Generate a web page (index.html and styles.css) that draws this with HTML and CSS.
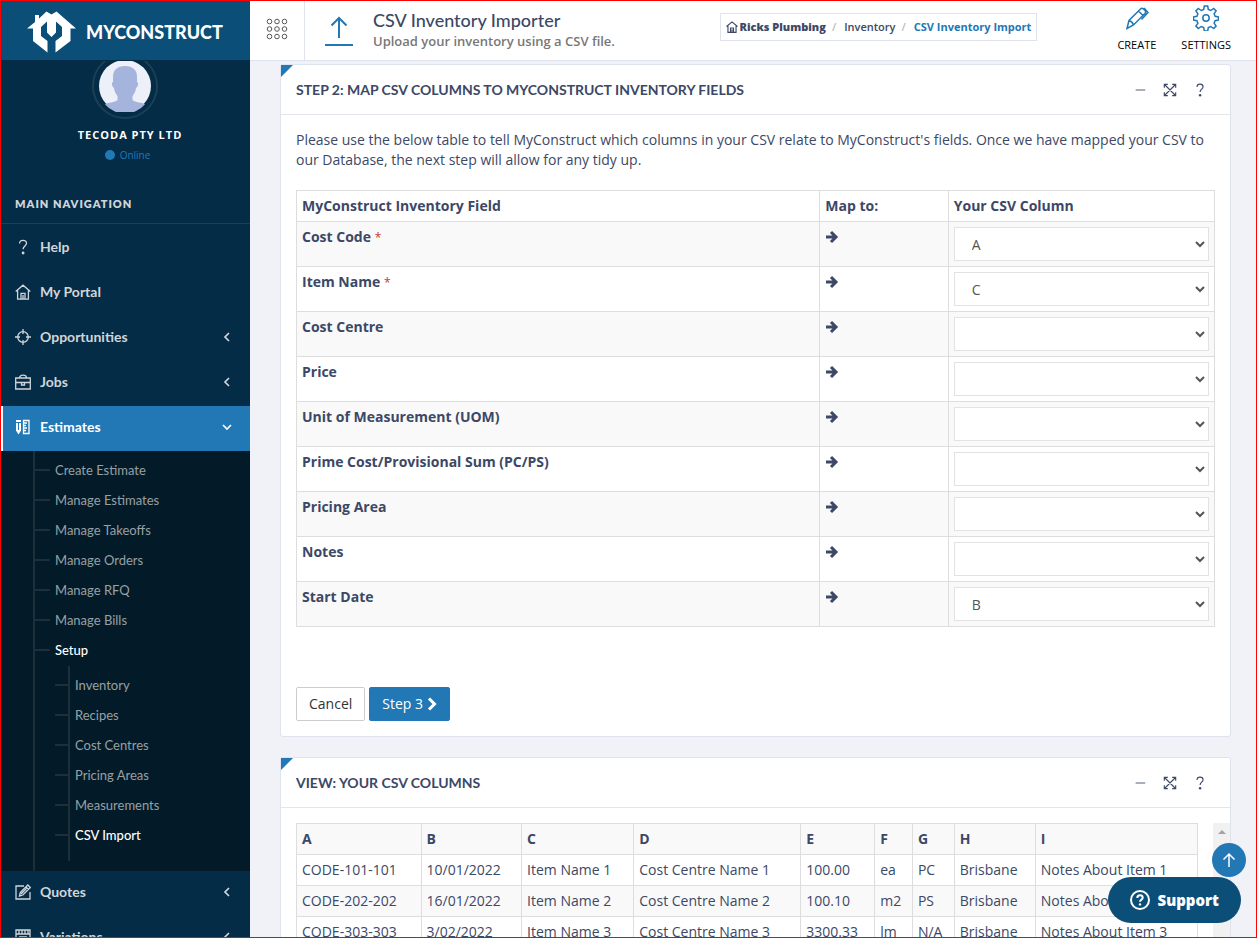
FILE: index.html
```html
<!DOCTYPE html>
<html lang="en">
    <head>
        <meta charset="utf-8">
        <title>CSV Inventory Importer</title>
        <link rel="stylesheet" href="styles.css">
    </head>
    <body>
        <!-- shared icons -->
        <svg class="sprite" aria-hidden="true">
            <symbol id="i-home" viewBox="0 0 16 16"><path d="M.7 7.4 8 1.2l7.3 6.2M2.600 6.500v8.700h10.8V6.500M6 15V9.300h4V15M8 11v4"/></symbol>
            <symbol id="i-help" viewBox="0 0 16 16"><path d="M4.600 4.500C4.600 2.400 6 1.300 8 1.300s3.500 1.200 3.500 3c0 2.700-3.400 2.900-3.400 6"/><circle class="dot" cx="8.100" cy="14" r="1.400"/></symbol>
            <symbol id="i-expand" viewBox="0 0 16 16"><path d="M2 2l12 12M14 2 2 14M1.500 5.500v-4h4M10.500 1.500h4v4M14.500 10.500v4h-4M5.500 14.500h-4v-4"/></symbol>
            <symbol id="i-arrow" viewBox="0 0 14 14"><path d="M1 7h10M6 2l5 5-5 5"/></symbol>
            <symbol id="i-left" viewBox="0 0 10 10"><path d="M7 1 3 5l4 4"/></symbol>
            <symbol id="i-up" viewBox="0 0 16 16"><path d="M8 15V2M2.500 7.500 8 2l5.500 5.500"/></symbol>
        </svg>

        <div class="app">
            <header class="topbar">
                <a class="logo" href="#">
                    <svg viewBox="0 0 50 44" width="50" height="44">
                        <path fill="#fff" d="M0 18.500 8 12V5h4v3.500L19.500 1.500l5 3 5-3L49 18.500h-5.500V31L28.500 42.500V31l6.500-5v-9l-6-5.500v11L24.500 27 20 22.500v-11L14 17v9l6.500 5v11.500L6 31V18.500z"/>
                    </svg>
                    <span>MYCONSTRUCT</span>
                </a>
                <button class="grid-btn" aria-label="Toggle menu">
                    <svg viewBox="0 0 22 22" width="22" height="22">
                        <circle cx="3.500" cy="3.500" r="2.300"/><circle cx="11" cy="3.500" r="2.300"/><circle cx="18.500" cy="3.500" r="2.300"/>
                        <circle cx="3.500" cy="11" r="2.300"/><circle cx="11" cy="11" r="2.300"/><circle cx="18.500" cy="11" r="2.300"/>
                        <circle cx="3.500" cy="18.500" r="2.300"/><circle cx="11" cy="18.500" r="2.300"/><circle cx="18.500" cy="18.500" r="2.300"/>
                    </svg>
                </button>
                <svg class="upload" viewBox="0 0 30 30" width="30" height="30"><path d="M15 22V2M7.500 9.500 15 2l7.500 7.500M1 29h28"/></svg>
                <div class="page-title">
                    <h1>CSV Inventory Importer</h1>
                    <p>Upload your inventory using a CSV file.</p>
                </div>
                <nav class="breadcrumb">
                    <a href="#"><svg class="icon"><use href="#i-home"/></svg><b>Ricks Plumbing</b></a>
                    <i>/</i>
                    <a href="#">Inventory</a>
                    <i>/</i>
                    <a class="current" href="#">CSV Inventory Import</a>
                </nav>
                <div class="actions">
                    <button>
                        <svg viewBox="0 0 26 26" width="26" height="26"><path d="M3 23.500l2-8L16.500 4q1.500-1.500 3 0l1.500 1.500q1.500 1.500 0 3L9.500 20zM5 15.500q3.500 1 4.500 4.500M14.500 6l5 5M19.500 4.500l1-1 3.500 4-6.500 7"/></svg>
                        CREATE
                    </button>
                    <button>
                        <svg viewBox="0 0 26 26" width="26" height="26"><circle cx="13" cy="13" r="3.200"/><path d="M11.300 1h3.400l.6 3.500 2.500 1 2.900-2 2.400 2.400-2 2.900 1 2.500 3.400.6v3.200l-3.400.6-1 2.500 2 2.900-2.400 2.400-2.900-2-2.500 1-.6 3.500h-3.400l-.6-3.500-2.500-1-2.900 2-2.400-2.400 2-2.900-1-2.500-3.400-.6v-3.200l3.400-.6 1-2.500-2-2.900 2.400-2.400 2.900 2 2.500-1z"/></svg>
                        SETTINGS
                    </button>
                </div>
            </header>

            <aside class="sidebar">
                <div class="profile">
                    <div class="avatar">
                        <svg viewBox="0 0 52 52" width="52" height="52">
                            <circle cx="26" cy="26" r="26" fill="#edf0f9"/>
                            <path fill="#a4b4dc" d="M26 6c8 0 12 4 12 11v5c1.500 0 1.500 5-1 6-.5 4-2 6-3.500 8v4c3 3 9 2 12.500 4.200A26 26 0 0 1 6 44.200C9.500 42 15.500 43 18.500 40v-4c-1.500-2-3-4-3.500-8-2.500-1-2.500-6-1-6v-5c0-7 4-11 12-11z"/>
                        </svg>
                    </div>
                    <div class="name">TECODA PTY LTD</div>
                    <div class="status"><span></span>Online</div>
                </div>
                <h2>MAIN NAVIGATION</h2>
                <ul class="menu">
                    <li><a href="#"><svg class="icon"><use href="#i-help"/></svg>Help</a></li>
                    <li><a href="#"><svg class="icon"><use href="#i-home"/></svg>My Portal</a></li>
                    <li><a href="#"><svg class="icon" viewBox="0 0 16 16"><circle cx="8" cy="8" r="5.300"/><path d="M8 0v5M8 11v5M0 8h5M11 8h5"/></svg>Opportunities<svg class="chevron"><use href="#i-left"/></svg></a></li>
                    <li><a href="#"><svg class="icon" viewBox="0 0 16 16"><path d="M.7 4h14.600v11H.7zM4.500 4q0-2.800 3.500-2.800T11.500 4M1 8.500h5.500M9.500 8.500H15M6.500 8.500h3v2.500h-3z"/></svg>Jobs<svg class="chevron"><use href="#i-left"/></svg></a></li>
                    <li class="active">
                        <a href="#"><svg class="icon" viewBox="0 0 16 16"><path class="dot" d="M1 1h5v10.500L3.500 15.500 1 11.500z"/><path d="M8.500 1.500h5.500v13H8.500zM9 4h3M9 6.500h2M9 9h3M9 11.500h2"/><path class="groove" d="M1 3.500h5M3.500 4v7"/></svg>Estimates<svg class="chevron down"><use href="#i-left"/></svg></a>
                        <ul class="submenu">
                            <li><a href="#">Create Estimate</a></li>
                            <li><a href="#">Manage Estimates</a></li>
                            <li><a href="#">Manage Takeoffs</a></li>
                            <li><a href="#">Manage Orders</a></li>
                            <li><a href="#">Manage RFQ</a></li>
                            <li><a href="#">Manage Bills</a></li>
                            <li>
                                <a class="open" href="#">Setup</a>
                                <ul class="subsub">
                                    <li><a href="#">Inventory</a></li>
                                    <li><a href="#">Recipes</a></li>
                                    <li><a href="#">Cost Centres</a></li>
                                    <li><a href="#">Pricing Areas</a></li>
                                    <li><a href="#">Measurements</a></li>
                                    <li><a class="open" href="#">CSV Import</a></li>
                                </ul>
                            </li>
                        </ul>
                    </li>
                    <li><a href="#"><svg class="icon" viewBox="0 0 16 16"><path d="M9 2H1v13h14V8M4.500 12l.8-3.500 7.500-7.500 2.500 2.500L7.800 11zM11 3l2.500 2.500M6 10l6-6"/></svg>Quotes<svg class="chevron"><use href="#i-left"/></svg></a></li>
                    <li><a href="#"><svg class="icon" viewBox="0 0 16 16"><path d="M1 1h14v14H1zM1 5h14M4 1v4M7 1v4M10 1v4M13 1v4M4 8h8M4 11h8"/></svg>Variations<svg class="chevron"><use href="#i-left"/></svg></a></li>
                </ul>
            </aside>

            <main class="content">
                <section class="panel">
                    <div class="panel-head">
                        <h3>STEP 2: MAP CSV COLUMNS TO MYCONSTRUCT INVENTORY FIELDS</h3>
                        <div class="tools">
                            <button aria-label="Collapse"><svg class="icon thin" viewBox="0 0 16 16"><path d="M3 8h11"/></svg></button>
                            <button aria-label="Full screen"><svg class="icon"><use href="#i-expand"/></svg></button>
                            <button aria-label="Help"><svg class="icon"><use href="#i-help"/></svg></button>
                        </div>
                    </div>
                    <div class="panel-body">
                        <p>Please use the below table to tell MyConstruct which columns in your CSV relate to MyConstruct's fields. Once we have mapped your CSV to our Database, the next step will allow for any tidy up.</p>
                        <table class="mapping">
                            <thead>
                                <tr><th>MyConstruct Inventory Field</th><th>Map to:</th><th>Your CSV Column</th></tr>
                            </thead>
                            <tbody>
                                <tr><th><label for="code">Cost Code <span>*</span></label></th><td><svg class="arrow"><use href="#i-arrow"/></svg></td><td><select id="code"><option>A</option></select></td></tr>
                                <tr><th><label for="item">Item Name <span>*</span></label></th><td><svg class="arrow"><use href="#i-arrow"/></svg></td><td><select id="item"><option>C</option></select></td></tr>
                                <tr><th><label for="centre">Cost Centre</label></th><td><svg class="arrow"><use href="#i-arrow"/></svg></td><td><select id="centre"><option></option></select></td></tr>
                                <tr><th><label for="price">Price</label></th><td><svg class="arrow"><use href="#i-arrow"/></svg></td><td><select id="price"><option></option></select></td></tr>
                                <tr><th><label for="uom">Unit of Measurement (UOM)</label></th><td><svg class="arrow"><use href="#i-arrow"/></svg></td><td><select id="uom"><option></option></select></td></tr>
                                <tr><th><label for="pcps">Prime Cost/Provisional Sum (PC/PS)</label></th><td><svg class="arrow"><use href="#i-arrow"/></svg></td><td><select id="pcps"><option></option></select></td></tr>
                                <tr><th><label for="area">Pricing Area</label></th><td><svg class="arrow"><use href="#i-arrow"/></svg></td><td><select id="area"><option></option></select></td></tr>
                                <tr><th><label for="notes">Notes</label></th><td><svg class="arrow"><use href="#i-arrow"/></svg></td><td><select id="notes"><option></option></select></td></tr>
                                <tr><th><label for="start">Start Date</label></th><td><svg class="arrow"><use href="#i-arrow"/></svg></td><td><select id="start"><option>B</option></select></td></tr>
                            </tbody>
                        </table>
                        <div class="buttons">
                            <button class="btn">Cancel</button>
                            <button class="btn primary">Step 3 <svg viewBox="0 0 10 14" width="10" height="14"><path d="M2 1.500 7.500 7 2 12.500"/></svg></button>
                        </div>
                    </div>
                </section>

                <section class="panel">
                    <div class="panel-head">
                        <h3>VIEW: YOUR CSV COLUMNS</h3>
                        <div class="tools">
                            <button aria-label="Collapse"><svg class="icon thin" viewBox="0 0 16 16"><path d="M3 8h11"/></svg></button>
                            <button aria-label="Full screen"><svg class="icon"><use href="#i-expand"/></svg></button>
                            <button aria-label="Help"><svg class="icon"><use href="#i-help"/></svg></button>
                        </div>
                    </div>
                    <div class="csv-view">
                        <table class="csv">
                            <thead>
                                <tr><th>A</th><th>B</th><th>C</th><th>D</th><th>E</th><th>F</th><th>G</th><th>H</th><th>I</th></tr>
                            </thead>
                            <tbody>
                                <tr><td>CODE-101-101</td><td>10/01/2022</td><td>Item Name 1</td><td>Cost Centre Name 1</td><td>100.00</td><td>ea</td><td>PC</td><td>Brisbane</td><td>Notes About Item 1</td></tr>
                                <tr><td>CODE-202-202</td><td>16/01/2022</td><td>Item Name 2</td><td>Cost Centre Name 2</td><td>100.10</td><td>m2</td><td>PS</td><td>Brisbane</td><td>Notes About Item 2</td></tr>
                                <tr><td>CODE-303-303</td><td>3/02/2022</td><td>Item Name 3</td><td>Cost Centre Name 3</td><td>3300.33</td><td>lm</td><td>N/A</td><td>Brisbane</td><td>Notes About Item 3</td></tr>
                            </tbody>
                        </table>
                        <div class="scrollbar"></div>
                    </div>
                </section>
            </main>
        </div>

        <button class="to-top" aria-label="Back to top"><svg class="icon"><use href="#i-up"/></svg></button>
        <button class="support">
            <svg viewBox="0 0 20 20" width="20" height="20"><circle cx="10" cy="10" r="9"/><path d="M7.300 8c0-1.800 1.200-2.700 2.700-2.700s2.700 1 2.700 2.400c0 1.900-2.700 1.900-2.700 4"/><circle class="dot" cx="10" cy="14.400" r="1.200"/></svg>
            Support
        </button>
        <div class="frame"></div>
    </body>
</html>
```
FILE: styles.css
```css
*{
    box-sizing: border-box;
}
body{
    margin: 0;
    font-family: "Open Sans", sans-serif;
    font-size: 14px;
    line-height: 20px;
    color: #3c4866;
    background: #f1f2f7;
}
h1,h2,h3,p,ul{
    margin: 0;
    padding: 0;
}
ul{
    list-style: none;
}
a{
    color: inherit;
    text-decoration: none;
}
button{
    font: inherit;
    color: inherit;
    padding: 0;
    border: none;
    background: none;
    cursor: pointer;
}
svg{
    fill: none;
    stroke: currentColor;
    flex: none;
}
.logo svg,.avatar svg{
    stroke: none;
}
.dot{
    fill: currentColor;
    stroke: none;
}
.groove{
    stroke: #2278b5;
    stroke-width: 1;
}
.sprite{
    position: absolute;
    width: 0;
    height: 0;
}
.icon{
    width: 16px;
    height: 16px;
}
.app{
    display: grid;
    grid-template-columns: 250px 1fr;
    grid-template-rows: 61px 1fr;
    height: 100vh;
    overflow: hidden;
}

/* top bar */
.topbar{
    grid-column: 1 / 3;
    display: flex;
    background: #fff;
    box-shadow: inset 0 -1px #dfe3ee;
    z-index: 1;
}
.logo{
    width: 250px;
    display: flex;
    align-items: center;
    gap: 9px;
    padding: 3px 0 0 27px;
    color: #fff;
    background: #0b4e78;
    border-bottom: 1px solid #052c46;
    font-family: Lato, sans-serif;
    font-size: 18px;
    font-weight: 900;
}
.grid-btn{
    width: 55px;
    padding-top: 2px;
    border-right: 1px solid #dfe3ee;
    color: #555;
}
.upload{
    align-self: center;
    margin: 0 19px;
    color: #2278b5;
    stroke-width: 2;
}
.page-title{
    padding-top: 8px;
    white-space: nowrap;
}
.page-title h1{
    font-family: Lato, sans-serif;
    font-size: 18px;
    line-height: 24px;
    font-weight: 500;
}
.page-title p{
    font-size: 13px;
    font-weight: 600;
    line-height: 18px;
    color: #777;
}
.breadcrumb{
    display: flex;
    align-items: center;
    gap: 8px;
    height: 28px;
    margin: 13px 0 0 auto;
    padding: 0 5px;
    border: 1px solid #dfe3ee;
    font-size: 11px;
    font-weight: 600;
    white-space: nowrap;
}
.breadcrumb a{
    display: flex;
    align-items: center;
    gap: 2px;
}
.breadcrumb .icon{
    width: 12px;
    height: 12px;
    stroke-width: 1.500;
}
.breadcrumb i{
    color: #bbb;
    margin-left: -2px;
    font-style: normal;
}
.breadcrumb .current{
    color: #2278b5;
    font-weight: 700;
}
.actions{
    display: flex;
    gap: 25px;
    margin: 0 26px 0 80px;
}
.actions button{
    display: flex;
    flex-direction: column;
    align-items: center;
    gap: 4px;
    padding-top: 5px;
    color: #000;
    font-size: 11px;
    font-weight: 500;
}
.actions svg{
    color: #2278b5;
    stroke-width: 1.500;
}

/* sidebar */
.sidebar{
    overflow: hidden;
    background: #052c46;
    color: #d0d5d9;
    font-family: Lato, sans-serif;
}
.profile{
    display: flex;
    flex-direction: column;
    align-items: center;
    margin-top: -8px;
    font-family: "Open Sans", sans-serif;
}
.avatar{
    display: flex;
    padding: 5px;
    border: 2px solid #1c3f55;
    border-radius: 50%;
}
.name{
    margin-top: 6px;
    padding-left: 10px;
    font-size: 11px;
    font-weight: 700;
    color: #fff;
    letter-spacing: 1px;
}
.status{
    display: flex;
    align-items: center;
    gap: 5px;
    padding-left: 5px;
    font-size: 10px;
    color: #2278b5;
}
.status span{
    width: 10px;
    height: 10px;
    border-radius: 50%;
    background: #2278b5;
}
.sidebar h2{
    margin-top: 29px;
    padding: 0 15px 9px;
    border-bottom: 1px solid #1c3f55;
    font-size: 11px;
    font-weight: 800;
    letter-spacing: 1px;
}
.menu{
    padding-top: 2px;
}
.menu > li > a{
    display: flex;
    align-items: center;
    gap: 9px;
    height: 45px;
    padding: 0 18px 3px 15px;
    font-size: 14px;
    font-weight: 700;
}
.menu .active > a{
    padding-left: 12px;
    border-left: 3px solid #fff;
    color: #fff;
    background: #2278b5;
}
.menu .icon{
    stroke-width: 1.300;
}
.menu .chevron{
    width: 10px;
    height: 10px;
    margin-left: auto;
    stroke-width: 1.700;
}
.down{
    transform: rotate(-90deg);
}
.submenu{
    padding: 4px 0 10px 33px;
    background: linear-gradient(#1d3039, #1d3039) 33px 0 / 2px 100% no-repeat #031b29;
    font-size: 13px;
    color: #98a0a4;
}
.submenu a{
    display: flex;
    align-items: center;
    gap: 5px;
    height: 30px;
}
.submenu a::before{
    content: "";
    width: 17px;
    height: 2px;
    background: #1d3039;
}
.submenu .open{
    color: #fff;
    font-weight: 500;
}
.subsub{
    margin: 1px 0 0 22px;
    padding: 4px 0 11px;
    background: linear-gradient(#1d3039, #1d3039) 13px 0 / 2px 100% no-repeat;
}
.subsub a::before{
    width: 15px;
}

/* panels */
.content{
    overflow: hidden;
    padding: 3px 26px 0 30px;
}
.panel{
    margin-bottom: 20px;
    background: #fff;
    border: 1px solid #dfe3ee;
    border-radius: 3px;
}
.panel-head{
    display: flex;
    justify-content: space-between;
    align-items: center;
    height: 50px;
    padding: 0 22px 0 15px;
    border-bottom: 1px solid #e2e5ea;
    background: linear-gradient(135deg, #2278b5 8px, transparent 9px);
}
.panel-head h3{
    font-family: Lato, sans-serif;
    font-size: 14px;
    font-weight: 700;
}
.tools{
    display: flex;
    gap: 14px;
}
.tools button{
    display: flex;
}
.tools .icon{
    height: 14px;
    stroke-width: 1.300;
}
.tools .thin{
    stroke-width: 1;
}
.panel-body{
    padding: 15px;
}
table{
    width: 100%;
    border-collapse: collapse;
}
th,td{
    padding: 5px;
    border: 1px solid #ddd;
    text-align: left;
    vertical-align: top;
}
.mapping{
    margin-top: 20px;
}
.mapping th:first-child{
    width: 57%;
}
.mapping th:nth-child(2){
    width: 14%;
}
.mapping tbody tr:nth-child(odd),.csv thead tr,.csv tbody tr:nth-child(even){
    background: #f9f9f9;
}
.mapping span{
    color: #c0392b;
    font-size: 12px;
    font-weight: 400;
}
.arrow{
    display: block;
    width: 14px;
    height: 14px;
    margin-top: 3px;
    stroke-width: 3;
}
select{
    display: block;
    width: 100%;
    height: 34px;
    padding: 6px 13px;
    border: 1px solid #e2e2e4;
    border-radius: 0;
    background: #fff;
    color: #555;
    font: inherit;
}
.buttons{
    display: flex;
    gap: 4px;
    margin-top: 60px;
}
.btn{
    display: flex;
    align-items: center;
    gap: 4px;
    height: 34px;
    padding: 0 12px;
    border: 1px solid #ccc;
    border-radius: 2px;
    color: #333;
}
.primary{
    border-color: #2278b5;
    color: #fff;
    background: #2278b5;
}
.btn svg{
    stroke-width: 3;
}
.csv-view{
    display: flex;
    gap: 15px;
    padding: 15px 0 15px 15px;
}
.csv td{
    white-space: nowrap;
}
.scrollbar{
    flex: none;
    width: 17px;
    background: #f1f1f1;
}
.scrollbar::before{
    content: "";
    display: block;
    width: 0;
    margin: 7px auto 0;
    border: 4px solid transparent;
    border-top: none;
    border-bottom-color: #a3a3a3;
}

/* floating buttons */
.to-top,.support{
    position: fixed;
    display: flex;
    align-items: center;
    justify-content: center;
    color: #fff;
}
.to-top{
    right: 11px;
    bottom: 61px;
    width: 34px;
    height: 34px;
    border-radius: 50%;
    background: #2278b5;
    stroke-width: 1.500;
}
.support{
    right: 16px;
    bottom: 15px;
    gap: 8px;
    height: 46px;
    padding: 0 22px;
    border-radius: 23px;
    background: #0b4e78;
    font-size: 15px;
    font-weight: 800;
    stroke-width: 2;
}
.frame{
    position: fixed;
    inset: 0;
    border: 1px solid #f00;
    pointer-events: none;
    z-index: 2;
}
```
